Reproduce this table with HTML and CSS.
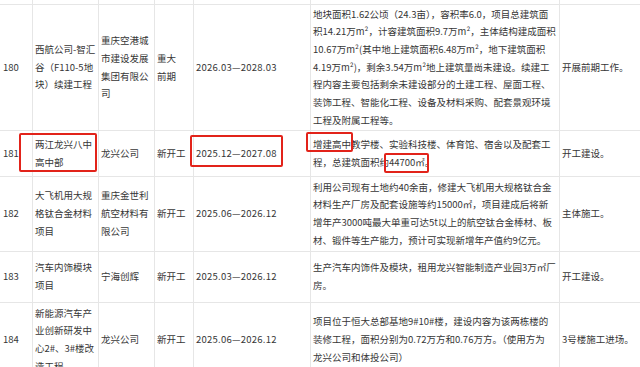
FILE: index.html
```html
<!DOCTYPE html>
<html lang="zh">
<head>
<meta charset="utf-8">
<link rel="stylesheet" href="styles.css">
</head>
<body>
<div class="page">
<table class="grid">
<colgroup>
<col class="c-no"><col class="c-name"><col class="c-org"><col class="c-type"><col class="c-date"><col class="c-desc"><col class="c-prog">
</colgroup>
<tr class="r-prev"><td></td><td></td><td></td><td></td><td></td><td></td><td></td></tr>
<tr class="r-180">
<td>180</td>
<td>西航公司-智汇<br>谷（F110-5地<br>块）续建工程</td>
<td>重庆空港城<br>市建设发展<br>集团有限公<br>司</td>
<td>重大<br>前期</td>
<td class="date">2026.03—2028.03</td>
<td>地块面积1.62公顷（24.3亩），容积率6.0，项目总建筑面<br>积14.21万m²，计容建筑面积9.7万m²，主体结构建成面积<br>10.67万m²(其中地上建筑面积6.48万m²，地下建筑面积<br>4.19万m²)，剩余3.54万m²地上建筑量尚未建设。续建工<br>程内容主要包括剩余未建设部分的土建工程、屋面工程、<br>装饰工程、智能化工程、设备及材料采购、配套景观环境<br>工程及附属工程等。</td>
<td>开展前期工作。</td>
</tr>
<tr class="r-181">
<td>181</td>
<td>两江龙兴八中<br>高中部</td>
<td>龙兴公司</td>
<td>新开工</td>
<td class="date">2025.12—2027.08</td>
<td>增建高中教学楼、实验科技楼、体育馆、宿舍以及配套工<br>程，总建筑面积约44700㎡。</td>
<td>开工建设。</td>
</tr>
<tr class="r-182">
<td>182</td>
<td>大飞机用大规<br>格钛合金材料<br>项目</td>
<td>重庆金世利<br>航空材料有<br>限公司</td>
<td>新开工</td>
<td class="date">2025.06—2026.12</td>
<td>利用公司现有土地约40余亩，修建大飞机用大规格钛合金<br>材料生产厂房及配套设施等约15000㎡，项目建成后将新<br>增年产3000吨最大单重可达5t以上的航空钛合金棒材、板<br>材、锻件等生产能力，预计可实现新增年产值约9亿元。</td>
<td>主体施工。</td>
</tr>
<tr class="r-183">
<td>183</td>
<td>汽车内饰模块<br>项目</td>
<td>宁海创辉</td>
<td>新开工</td>
<td class="date">2025.03—2026.12</td>
<td>生产汽车内饰件及模块，租用龙兴智能制造产业园3万㎡厂<br>房。</td>
<td>开工建设。</td>
</tr>
<tr class="r-184">
<td>184</td>
<td>新能源汽车产<br>业创新研发中<br>心2#、3#楼改<br>造工程</td>
<td>龙兴公司</td>
<td>新开工</td>
<td class="date">2025.06—2026.12</td>
<td>项目位于恒大总部基地9#10#楼，建设内容为该两栋楼的<br>装修工程，面积分别为0.72万方和0.76万方。（使用方为<br>龙兴公司和体投公司）</td>
<td>3号楼施工进场。</td>
</tr>
</table>
<span class="mark mark-name"></span>
<span class="mark mark-date"></span>
<span class="mark mark-build"></span>
<span class="mark mark-area"></span>
</div>
</body>
</html>
```
FILE: styles.css
```css
html, body {
  margin: 0;
  padding: 0;
  background: #ffffff;
  overflow: hidden;
}
.page {
  position: relative;
  width: 640px;
  height: 367px;
  overflow: hidden;
}
.grid {
  table-layout: fixed;
  width: 650px;
  border-collapse: separate;
  border-spacing: 0;
  font-family: "Noto Sans CJK SC", "Noto Sans", sans-serif;
  font-size: 9.5px;
  line-height: 17.7px;
  color: #363636;
}
.c-no { width: 33px; }
.c-name { width: 66px; }
.c-org { width: 56px; }
.c-type { width: 39px; }
.c-date { width: 117px; }
.c-desc { width: 249px; }
.c-prog { width: 90px; }
.grid td {
  box-sizing: border-box;
  border-right: 1px solid #e6e6e6;
  border-bottom: 1px solid #e6e6e6;
  padding: 0 1px 0 2px;
  vertical-align: middle;
  white-space: nowrap;
  overflow: hidden;
}
.grid td:first-child {
  padding-left: 3px;
}
.grid td:last-child {
  border-right: none;
}
.grid td.date {
  letter-spacing: 0.25px;
}
.r-prev td { height: 5px; padding: 0; }
.r-180 td { height: 126px; }
.r-181 td { height: 46px; }
.r-182 td { height: 75px; }
.r-183 td { height: 51px; }
.r-184 td { height: 75px; }
.mark {
  position: absolute;
  box-sizing: border-box;
  border: 2px solid #e2231a;
  border-radius: 2px;
}
.mark-name { left: 19px; top: 133px; width: 78px; height: 39px; }
.mark-date { left: 190px; top: 135px; width: 93px; height: 32px; }
.mark-build { left: 306px; top: 132px; width: 47px; height: 20px; }
.mark-area { left: 384px; top: 153px; width: 45px; height: 20px; }
```
